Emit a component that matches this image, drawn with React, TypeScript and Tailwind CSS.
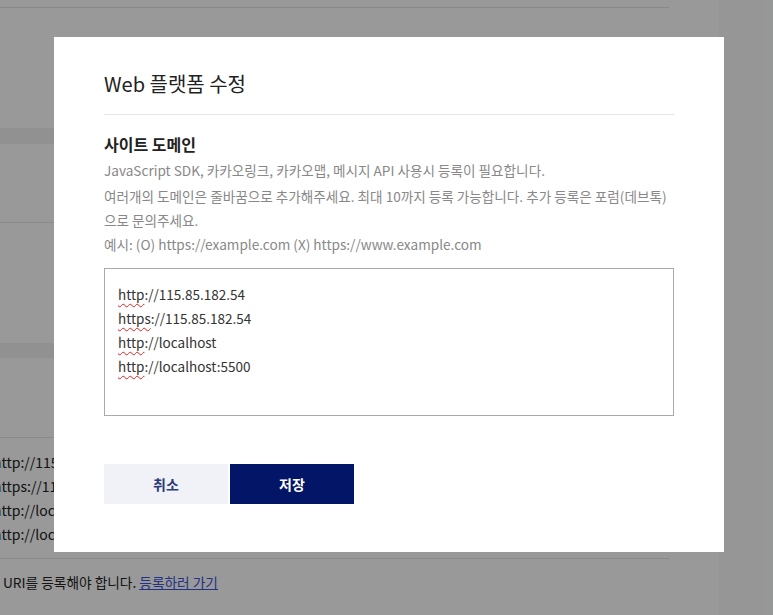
const font = "font-['Noto_Sans_CJK_KR','Noto_Sans',sans-serif]";

const domains = [
  { scheme: "http", rest: "://115.85.182.54" },
  { scheme: "https", rest: "://115.85.182.54" },
  { scheme: "http", rest: "://localhost" },
  { scheme: "http", rest: "://localhost:5500" },
];

const BackgroundPage = () => {
  return (
    <div className="flex h-[615px] w-full">
      <div className="w-[719px] bg-white">
        <div className="h-[7px]" />
        <div className="w-[669px] border-t border-[#e3e3e3]" />
        <div className="h-[120px]" />
        <div className="h-[16px] w-[669px] bg-[#f2f2f2]" />
        <div className="h-[78px]" />
        <div className="w-[669px] border-t border-[#e6e6e6]" />
        <div className="h-[120px]" />
        <div className="h-[15px] w-[669px] bg-[#f2f2f2]" />
        <div className="h-[79px]" />
        <div className="w-[669px] border-t border-[#e6e6e6]" />
        <ul className="-ml-[7px] pt-[12px] text-[14px] leading-[24px] text-[#222]">
          {domains.map((d, i) => (
            <li key={i}>
              {d.scheme}
              {d.rest}
            </li>
          ))}
        </ul>
        <div className="h-[12px]" />
        <div className="w-[669px] border-t border-[#e6e6e6]" />
        <p className="ml-[3px] pt-[11px] text-[13.7px] leading-[24px] text-[#222]">
          URI를 등록해야 합니다.{" "}
          <a href="#" className="text-[#3a55e0] underline">
            등록하러 가기
          </a>
        </p>
      </div>
      <div className="flex-1 bg-[#fafbfb]" />
    </div>
  );
};

const DomainModal = () => {
  return (
    <div className="absolute left-[54px] top-[37px] w-[670px] bg-white px-[50px] pt-[32px] pb-[48px]">
      <div className="border-b border-[#e5e5e5] pb-[15px]">
        <h2 className="text-[20px] leading-[30px] font-normal text-[#222]">Web 플랫폼 수정</h2>
      </div>
      <h3 className="mt-[17px] text-[16px] leading-[24px] font-bold text-[#222]">사이트 도메인</h3>
      <div className="text-[13.6px] leading-[24px] text-[#888]">
        <p className="mt-[2px]">JavaScript SDK, 카카오링크, 카카오맵, 메시지 API 사용시 등록이 필요합니다.</p>
        <p className="mt-[2px] whitespace-nowrap">
          여러개의 도메인은 줄바꿈으로 추가해주세요. 최대 10까지 등록 가능합니다. 추가 등록은 포럼(데브톡)
          <br />
          으로 문의주세요.
        </p>
        <p>예시: (O) https://example.com (X) https://www.example.com</p>
      </div>
      <div className="mt-[12px] h-[148px] border border-[#aaaaaa] px-[13px] pt-[13px] text-[13.5px] leading-[24px] text-[#333]">
        {domains.map((d, i) => (
          <div key={i}>
            <span className="underline decoration-wavy decoration-[#e02020] decoration-1 underline-offset-[3px]">
              {d.scheme}
            </span>
            {d.rest}
          </div>
        ))}
      </div>
      <div className="mt-[48px] flex gap-[2px]">
        <button className="h-[40px] w-[124px] bg-[#f1f2f8] text-[14px] font-bold text-[#2f3a78]">취소</button>
        <button className="h-[40px] w-[124px] bg-[#021566] text-[14px] font-bold text-white">저장</button>
      </div>
    </div>
  );
};

export default function App() {
  return (
    <div className={`relative h-[615px] w-full overflow-hidden ${font}`}>
      <BackgroundPage />
      <div className="absolute inset-0 bg-black/40" />
      <DomainModal />
    </div>
  );
}
